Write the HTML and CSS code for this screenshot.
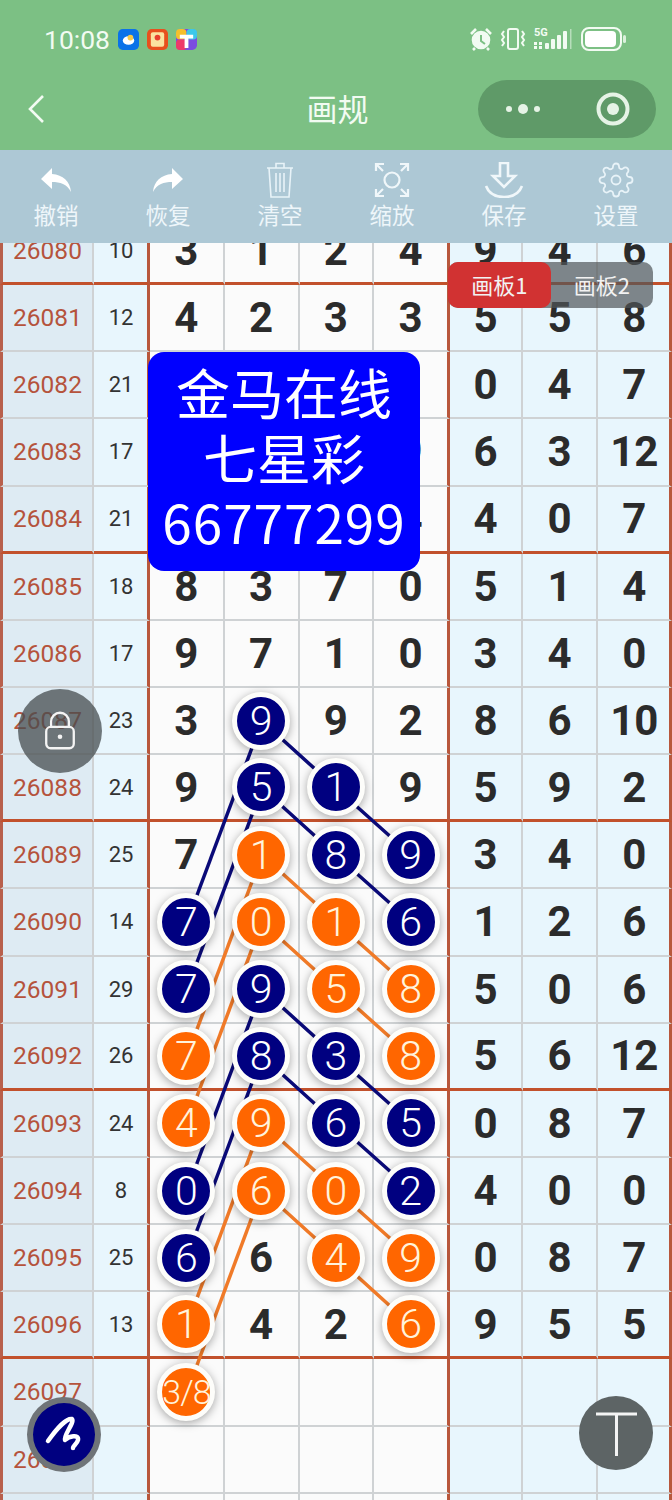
FILE: index.html
```html
<!DOCTYPE html>
<html lang="zh-CN">
<head>
    <meta charset="UTF-8">
    <meta name="viewport" content="width=device-width, initial-scale=1.0">
    <title>画规</title>
    <link rel="stylesheet" href="styles.css">
</head>
<body>
<div class="page">

    <header class="topbar">
        <div class="status">
            <div class="status-left">
                <span class="clock">10:08</span>
                <svg class="app-icon" viewBox="0 0 22 22"><rect width="22" height="22" rx="5" fill="#0a72e8"/><ellipse cx="11" cy="12" rx="6" ry="4.5" fill="#fff"/><circle cx="13" cy="9" r="3" fill="#f7c948"/></svg>
                <svg class="app-icon" viewBox="0 0 22 22"><rect width="22" height="22" rx="5" fill="#e8501e"/><rect x="4" y="3.5" width="14" height="15" rx="2" fill="#fbe3a0"/><circle cx="11" cy="9" r="3" fill="#e8402e"/></svg>
                <svg class="app-icon" viewBox="0 0 22 22"><rect width="22" height="22" rx="5" fill="#7b4de0"/><rect width="11" height="11" rx="4" fill="#f6c02c"/><rect x="11" width="11" height="11" rx="4" fill="#3cc8e8"/><rect y="11" width="11" height="11" rx="4" fill="#ee3a6a"/><path d="M4 6h14v4h-5v10h-4V10H4z" fill="#fff"/></svg>
            </div>
            <div class="status-right">
                <svg class="alarm" viewBox="0 0 22 24" fill="none" stroke="#f2fbf2" stroke-width="2.6"><circle cx="11" cy="13" r="8" fill="#f2fbf2"/><path d="M11 8v6l4 3" stroke="#7cc084" stroke-width="2"/><path d="M1 7l5-5M21 7l-5-5M5 21l-2 2M17 21l2 2"/></svg>
                <svg class="vibrate" viewBox="0 0 26 22" fill="none" stroke="#f2fbf2" stroke-width="2"><rect x="8" y="1" width="10" height="20" rx="2"/><path d="M4 3l-2 3 2 3-2 3 2 3 -2 3M22 3l2 3-2 3 2 3-2 3 2 3"/></svg>
                <div class="net">
                    <span class="net-label">5G</span>
                    <svg class="signal" viewBox="0 0 38 22" fill="#f2fbf2"><rect x="0" y="14" width="3" height="3"/><rect x="0" y="18" width="3" height="3"/><rect x="5" y="14" width="3" height="3"/><rect x="5" y="18" width="3" height="3"/><rect x="11" y="15" width="4" height="6" rx="1"/><rect x="17" y="11" width="4" height="10" rx="1"/><rect x="23" y="7" width="4" height="14" rx="1"/><rect x="29" y="3" width="4" height="18" rx="1"/><rect x="36" y="1" width="1.5" height="20" opacity=".5"/></svg>
                </div>
                <svg class="battery" viewBox="0 0 46 24"><rect x="1" y="1" width="39" height="22" rx="7" fill="none" stroke="#f2fbf2" stroke-width="2"/><rect x="4" y="4" width="31" height="16" rx="4" fill="#fff"/><rect x="42" y="8" width="3" height="8" rx="1.5" fill="#f2fbf2" opacity=".8"/></svg>
            </div>
        </div>
        <nav class="navbar">
            <svg class="back" viewBox="0 0 20 30" fill="none" stroke="#f2fbf2" stroke-width="2.6"><path d="M17 2L4 15l13 13"/></svg>
            <div class="nav-title">画规</div>
            <div class="capsule">
                <svg class="more" viewBox="0 0 36 12" fill="#e6f3e6"><circle cx="4" cy="6" r="3"/><circle cx="18" cy="6" r="5"/><circle cx="32" cy="6" r="3"/></svg>
                <svg class="target" viewBox="0 0 34 34" fill="none"><circle cx="17" cy="17" r="14.5" stroke="#e6f3e6" stroke-width="4"/><circle cx="17" cy="17" r="6" fill="#e6f3e6"/></svg>
            </div>
        </nav>
    </header>

    <div class="toolbar">
        <div class="tool">
            <svg class="tool-icon" viewBox="0 0 40 36" fill="#fff"><path d="M16 6L5 17l11 10v-7c8 0 15 2 19 10-1-11-8-17-19-18z"/></svg>
            <span>撤销</span>
        </div>
        <div class="tool">
            <svg class="tool-icon" viewBox="0 0 40 36" fill="#fff"><path d="M24 6l11 11-11 10v-7c-8 0-15 2-19 10 1-11 8-17 19-18z"/></svg>
            <span>恢复</span>
        </div>
        <div class="tool">
            <svg class="tool-icon" viewBox="0 0 40 36" fill="none" stroke="#e8f3f8" stroke-width="1.6"><path d="M7 6h26M16 6V1.5h8V6M9 6l2 29h18l2-29M16 11v19M20 11v19M24 11v19"/></svg>
            <span>清空</span>
        </div>
        <div class="tool">
            <svg class="tool-icon" viewBox="0 0 40 36" fill="none" stroke="#f0f7fa" stroke-width="2.2"><circle cx="20" cy="18" r="7.5"/><path d="M4 9V2h8M4 2l7 7M36 9V2h-8M36 2l-7 7M4 27v7h8M4 34l7-7M36 27v7h-8M36 34l-7-7"/></svg>
            <span>缩放</span>
        </div>
        <div class="tool">
            <svg class="tool-icon" viewBox="0 0 40 36" fill="none" stroke="#f0f7fa" stroke-width="2.6"><path d="M16 1h8v13h7L20 25 9 14h7zM2 24c3 8 10 11 18 11s15-3 18-11"/></svg>
            <span>保存</span>
        </div>
        <div class="tool">
            <svg class="tool-icon" viewBox="0 0 24 24" fill="none" stroke="#e8f3f8" stroke-width="1.2"><path d="M12 15a3 3 0 1 0 0-6 3 3 0 0 0 0 6z"/><path d="M19.4 15a1.65 1.65 0 0 0 .33 1.82l.06.06a2 2 0 0 1 0 2.83 2 2 0 0 1-2.83 0l-.06-.06a1.65 1.65 0 0 0-1.82-.33 1.65 1.65 0 0 0-1 1.51V21a2 2 0 0 1-2 2 2 2 0 0 1-2-2v-.09A1.65 1.65 0 0 0 9 19.4a1.65 1.65 0 0 0-1.82.33l-.06.06a2 2 0 0 1-2.83 0 2 2 0 0 1 0-2.83l.06-.06a1.65 1.65 0 0 0 .33-1.82 1.65 1.65 0 0 0-1.51-1H3a2 2 0 0 1-2-2 2 2 0 0 1 2-2h.09A1.65 1.65 0 0 0 4.6 9a1.65 1.65 0 0 0-.33-1.82l-.06-.06a2 2 0 0 1 0-2.83 2 2 0 0 1 2.83 0l.06.06a1.65 1.65 0 0 0 1.82.33H9a1.65 1.65 0 0 0 1-1.51V3a2 2 0 0 1 2-2 2 2 0 0 1 2 2v.09a1.65 1.65 0 0 0 1 1.51 1.65 1.65 0 0 0 1.82-.33l.06-.06a2 2 0 0 1 2.83 0 2 2 0 0 1 0 2.83l-.06.06a1.65 1.65 0 0 0-.33 1.82V9a1.65 1.65 0 0 0 1.51 1H21a2 2 0 0 1 2 2 2 2 0 0 1-2 2h-.09a1.65 1.65 0 0 0-1.51 1z"/></svg>
            <span>设置</span>
        </div>
    </div>

    <div class="board">
        <div class="table">
            <!-- linhas entre as bolas, coordenadas da pagina -->
            <svg class="links" viewBox="0 218 672 1300" fill="none" stroke-width="3.5">
                <g stroke="#0a0a78">
                    <path d="M262 721L336 788L411 855"/>
                    <path d="M262 788L336 855L411 922"/>
                    <path d="M262 721L187 922"/>
                    <path d="M262 788L187 989"/>
                    <path d="M262 989L336 1056L411 1123"/>
                    <path d="M262 1056L336 1123L411 1190"/>
                    <path d="M262 989L187 1190"/>
                    <path d="M262 1056L187 1257"/>
                </g>
                <g stroke="#f07a28">
                    <path d="M262 855L336 922L411 989"/>
                    <path d="M262 922L336 989L411 1056"/>
                    <path d="M262 855L187 1056"/>
                    <path d="M262 922L187 1123"/>
                    <path d="M262 1123L336 1190L411 1257"/>
                    <path d="M262 1190L336 1257L411 1325"/>
                    <path d="M262 1123L187 1325"/>
                    <path d="M262 1190L187 1392"/>
                </g>
            </svg>

            <div class="row sec"><div class="no">26080</div><div class="sum">10</div><div class="cell">3</div><div class="cell">1</div><div class="cell">2</div><div class="cell end">4</div><div class="cell r">9</div><div class="cell r">4</div><div class="cell r last">6</div></div>
            <div class="row"><div class="no">26081</div><div class="sum">12</div><div class="cell">4</div><div class="cell">2</div><div class="cell">3</div><div class="cell end">3</div><div class="cell r">5</div><div class="cell r">5</div><div class="cell r last">8</div></div>
            <div class="row"><div class="no">26082</div><div class="sum">21</div><div class="cell">7</div><div class="cell">5</div><div class="cell">8</div><div class="cell end">1</div><div class="cell r">0</div><div class="cell r">4</div><div class="cell r last">7</div></div>
            <div class="row"><div class="no">26083</div><div class="sum">17</div><div class="cell">2</div><div class="cell">0</div><div class="cell">6</div><div class="cell end">9</div><div class="cell r">6</div><div class="cell r">3</div><div class="cell r last">12</div></div>
            <div class="row sec"><div class="no">26084</div><div class="sum">21</div><div class="cell">6</div><div class="cell">8</div><div class="cell">3</div><div class="cell end">4</div><div class="cell r">4</div><div class="cell r">0</div><div class="cell r last">7</div></div>
            <div class="row"><div class="no">26085</div><div class="sum">18</div><div class="cell">8</div><div class="cell">3</div><div class="cell">7</div><div class="cell end">0</div><div class="cell r">5</div><div class="cell r">1</div><div class="cell r last">4</div></div>
            <div class="row"><div class="no">26086</div><div class="sum">17</div><div class="cell">9</div><div class="cell">7</div><div class="cell">1</div><div class="cell end">0</div><div class="cell r">3</div><div class="cell r">4</div><div class="cell r last">0</div></div>
            <div class="row"><div class="no">26087</div><div class="sum">23</div><div class="cell">3</div><div class="cell"><span class="ball navy">9</span></div><div class="cell">9</div><div class="cell end">2</div><div class="cell r">8</div><div class="cell r">6</div><div class="cell r last">10</div></div>
            <div class="row sec"><div class="no">26088</div><div class="sum">24</div><div class="cell">9</div><div class="cell"><span class="ball navy">5</span></div><div class="cell"><span class="ball navy">1</span></div><div class="cell end">9</div><div class="cell r">5</div><div class="cell r">9</div><div class="cell r last">2</div></div>
            <div class="row"><div class="no">26089</div><div class="sum">25</div><div class="cell">7</div><div class="cell"><span class="ball orange">1</span></div><div class="cell"><span class="ball navy">8</span></div><div class="cell end"><span class="ball navy">9</span></div><div class="cell r">3</div><div class="cell r">4</div><div class="cell r last">0</div></div>
            <div class="row"><div class="no">26090</div><div class="sum">14</div><div class="cell"><span class="ball navy">7</span></div><div class="cell"><span class="ball orange">0</span></div><div class="cell"><span class="ball orange">1</span></div><div class="cell end"><span class="ball navy">6</span></div><div class="cell r">1</div><div class="cell r">2</div><div class="cell r last">6</div></div>
            <div class="row"><div class="no">26091</div><div class="sum">29</div><div class="cell"><span class="ball navy">7</span></div><div class="cell"><span class="ball navy">9</span></div><div class="cell"><span class="ball orange">5</span></div><div class="cell end"><span class="ball orange">8</span></div><div class="cell r">5</div><div class="cell r">0</div><div class="cell r last">6</div></div>
            <div class="row sec"><div class="no">26092</div><div class="sum">26</div><div class="cell"><span class="ball orange">7</span></div><div class="cell"><span class="ball navy">8</span></div><div class="cell"><span class="ball navy">3</span></div><div class="cell end"><span class="ball orange">8</span></div><div class="cell r">5</div><div class="cell r">6</div><div class="cell r last">12</div></div>
            <div class="row"><div class="no">26093</div><div class="sum">24</div><div class="cell"><span class="ball orange">4</span></div><div class="cell"><span class="ball orange">9</span></div><div class="cell"><span class="ball navy">6</span></div><div class="cell end"><span class="ball navy">5</span></div><div class="cell r">0</div><div class="cell r">8</div><div class="cell r last">7</div></div>
            <div class="row"><div class="no">26094</div><div class="sum">8</div><div class="cell"><span class="ball navy">0</span></div><div class="cell"><span class="ball orange">6</span></div><div class="cell"><span class="ball orange">0</span></div><div class="cell end"><span class="ball navy">2</span></div><div class="cell r">4</div><div class="cell r">0</div><div class="cell r last">0</div></div>
            <div class="row"><div class="no">26095</div><div class="sum">25</div><div class="cell"><span class="ball navy">6</span></div><div class="cell">6</div><div class="cell"><span class="ball orange">4</span></div><div class="cell end"><span class="ball orange">9</span></div><div class="cell r">0</div><div class="cell r">8</div><div class="cell r last">7</div></div>
            <div class="row sec"><div class="no">26096</div><div class="sum">13</div><div class="cell"><span class="ball orange">1</span></div><div class="cell">4</div><div class="cell">2</div><div class="cell end"><span class="ball orange">6</span></div><div class="cell r">9</div><div class="cell r">5</div><div class="cell r last">5</div></div>
            <div class="row"><div class="no">26097</div><div class="sum"></div><div class="cell"><span class="ball orange small">3/8</span></div><div class="cell"></div><div class="cell"></div><div class="cell end"></div><div class="cell r"></div><div class="cell r"></div><div class="cell r last"></div></div>
            <div class="row"><div class="no">26098</div><div class="sum"></div><div class="cell"></div><div class="cell"></div><div class="cell"></div><div class="cell end"></div><div class="cell r"></div><div class="cell r"></div><div class="cell r last"></div></div>
            <div class="row"><div class="no"></div><div class="sum"></div><div class="cell"></div><div class="cell"></div><div class="cell"></div><div class="cell end"></div><div class="cell r"></div><div class="cell r"></div><div class="cell r last"></div></div>
        </div>
    </div>

    <!-- elementos flutuantes -->
    <div class="tabs">
        <div class="tab active">画板1</div>
        <div class="tab">画板2</div>
    </div>

    <div class="promo">
        <div>金马在线</div>
        <div>七星彩</div>
        <div class="promo-num">66777299</div>
    </div>

    <div class="float lock">
        <svg viewBox="0 0 36 46" fill="none" stroke="#f4f4f4" stroke-width="2.6"><rect x="2.5" y="19" width="31" height="24" rx="5"/><path d="M8 19v-6a10 10 0 0 1 20 0v6"/><circle cx="18" cy="30" r="2.6" fill="#f4f4f4" stroke="none"/></svg>
    </div>

    <div class="float pen">
        <svg viewBox="0 0 62 62" fill="none" stroke="#fff" stroke-width="4.5" stroke-linecap="round" stroke-linejoin="round"><path d="M15 37C24 24 34 14 39 15C42 18 30 32 32 36C36 32 46 30 45 36C44 40 40 42 40 44"/></svg>
    </div>

    <div class="float text-btn">
        <svg viewBox="0 0 74 74" fill="none" stroke="#f4f4f4" stroke-width="3"><path d="M17 18h41M37.5 18v42"/></svg>
    </div>

</div>
</body>
</html>
```

FILE: styles.css
```css
/* Pagina */
body {
    margin: 0;
    font-family: "Noto Sans CJK SC", "Noto Sans", sans-serif;
}

.page {
    position: relative;
    width: 672px;
    height: 1500px;
    overflow: hidden;
    display: flex;
    flex-direction: column;
    background-color: #fbfbfb;
}

/* Barra verde */
.topbar {
    background-color: #7cc084;
    height: 150px;
    flex-shrink: 0;
}

.status {
    height: 76px;
    display: flex;
    justify-content: space-between;
    align-items: center;
    padding: 2px 44px 0;
    box-sizing: border-box;
}

.status-left {
    display: flex;
    align-items: center;
    gap: 8px;
}

.clock {
    font-family: Roboto, sans-serif;
    font-size: 26.5px;
    color: #f2fbf2;
}

.app-icon {
    width: 21px;
    height: 21px;
}

.status-right {
    display: flex;
    align-items: center;
    gap: 8px;
}

.alarm {
    width: 22px;
    height: 24px;
}

.vibrate {
    width: 26px;
    height: 22px;
}

.net {
    position: relative;
    width: 38px;
    height: 22px;
}

.net-label {
    position: absolute;
    left: 0;
    top: -1px;
    font-family: Roboto, sans-serif;
    font-weight: 700;
    font-size: 11px;
    line-height: 12px;
    color: #f2fbf2;
}

.signal {
    display: block;
    width: 38px;
    height: 22px;
}

.battery {
    width: 46px;
    height: 24px;
    margin-left: 1px;
    margin-right: 1px;
}

.navbar {
    height: 66px;
    display: grid;
    grid-template-columns: 1fr auto 1fr;
    align-items: center;
    padding: 0 16px 0 26px;
}

.back {
    width: 20px;
    height: 30px;
}

.nav-title {
    font-size: 31px;
    line-height: 40px;
    color: #f2fbf2;
    margin-left: -7px;
    margin-top: -3px;
}

.capsule {
    justify-self: end;
    width: 178px;
    height: 58px;
    border-radius: 29px;
    background-color: #5f9a68;
    display: flex;
    align-items: center;
    justify-content: space-between;
    padding: 0 26px 0 27px;
    box-sizing: border-box;
}

.more {
    width: 36px;
    height: 12px;
}

.target {
    width: 34px;
    height: 34px;
}

/* Ferramentas */
.toolbar {
    background-color: #adc8d5;
    height: 93px;
    flex-shrink: 0;
    display: grid;
    grid-template-columns: repeat(6, 1fr);
    padding-top: 12px;
    box-sizing: border-box;
    position: relative;
    z-index: 3;
}

.tool {
    display: flex;
    flex-direction: column;
    align-items: center;
    gap: 1px;
    color: #eef6fa;
    font-size: 22.5px;
    line-height: 30px;
}

.tool-icon {
    width: 40px;
    height: 36px;
}

/* Tabela */
.board {
    flex: 1;
    overflow: hidden;
}

.table {
    position: relative;
    margin-top: -25px;
}

.links {
    position: absolute;
    left: 0;
    top: 0;
    width: 672px;
    height: 1300px;
    z-index: 1;
}

.row {
    display: grid;
    grid-template-columns: 94px 56px repeat(3, 74.75px) 75.5px 73.5px 74.5px 74.25px;
    height: 67.15px;
}

.row > div {
    box-sizing: border-box;
    display: flex;
    align-items: center;
    justify-content: center;
    border-right: 2px solid #cfd2d4;
    border-bottom: 2px solid #cfd2d4;
}

.no {
    background-color: #deebf3;
    color: #b5533c;
    font-family: Roboto, sans-serif;
    font-size: 24.5px;
    border-left: 3px solid #b8604c;
}

.row > .sum {
    background-color: #e8f6fd;
    color: #333;
    font-family: Roboto, sans-serif;
    font-size: 22px;
    padding-left: 1px;
    border-right: 3px solid #b8573c;
}

.cell {
    background-color: #fbfbfb;
    color: #2b2b2b;
    font-family: Roboto, sans-serif;
    font-weight: 700;
    font-size: 42px;
}

.cell.r {
    background-color: #e8f6fd;
}

.row > .cell.end,
.row > .cell.last {
    border-right: 3px solid #b8573c;
}

.cell.last {
    padding-left: 2px;
}

.row.sec > div {
    border-bottom: 3px solid #c2512c;
}

/* Bolas */
.ball {
    position: relative;
    z-index: 2;
    width: 48px;
    height: 48px;
    flex-shrink: 0;
    border: 5px solid #fdfdfa;
    border-radius: 50%;
    box-shadow: 0 2px 10px rgba(0, 0, 0, 0.35);
    display: flex;
    align-items: center;
    justify-content: center;
    color: #fff;
    font-weight: 300;
    font-size: 41px;
}

.navy {
    background-color: #000080;
}

.orange {
    background-color: #ff6600;
    color: #fff3dc;
}

.small {
    font-size: 34px;
    letter-spacing: -1px;
    white-space: nowrap;
}

/* Flutuantes */
.tabs {
    position: absolute;
    left: 448px;
    top: 262px;
    width: 205px;
    height: 46px;
    display: flex;
    border-radius: 10px;
    background-color: rgba(80, 85, 88, 0.7);
    z-index: 4;
}

.tab {
    flex: 1;
    display: flex;
    align-items: center;
    justify-content: center;
    padding-bottom: 3px;
    box-sizing: border-box;
    border-radius: 10px;
    color: #f2f2f2;
    font-size: 22px;
}

.tab.active {
    background-color: #d13232;
}

.promo {
    position: absolute;
    left: 148px;
    top: 352px;
    width: 272px;
    height: 219px;
    box-sizing: border-box;
    padding-top: 8px;
    background-color: #0000ff;
    border-radius: 16px;
    color: #fff;
    font-size: 54px;
    line-height: 64.5px;
    text-align: center;
    z-index: 4;
}

.promo-num {
    font-size: 53px;
    letter-spacing: 1px;
}

.float {
    position: absolute;
    border-radius: 50%;
    display: flex;
    align-items: center;
    justify-content: center;
    z-index: 4;
}

.lock {
    left: 18px;
    top: 689px;
    width: 84px;
    height: 84px;
    background-color: rgba(69, 76, 79, 0.75);
}

.lock svg {
    width: 32px;
    height: 41px;
    margin-bottom: 2px;
}

.pen {
    left: 27px;
    top: 1397px;
    width: 74px;
    height: 75px;
    box-sizing: border-box;
    background-color: #000080;
    border: 6px solid #6f7478;
}

.pen svg {
    width: 62px;
    height: 62px;
}

.text-btn {
    left: 579px;
    top: 1396px;
    width: 74px;
    height: 74px;
    background-color: #5d6465;
}

.text-btn svg {
    width: 74px;
    height: 74px;
}
```
